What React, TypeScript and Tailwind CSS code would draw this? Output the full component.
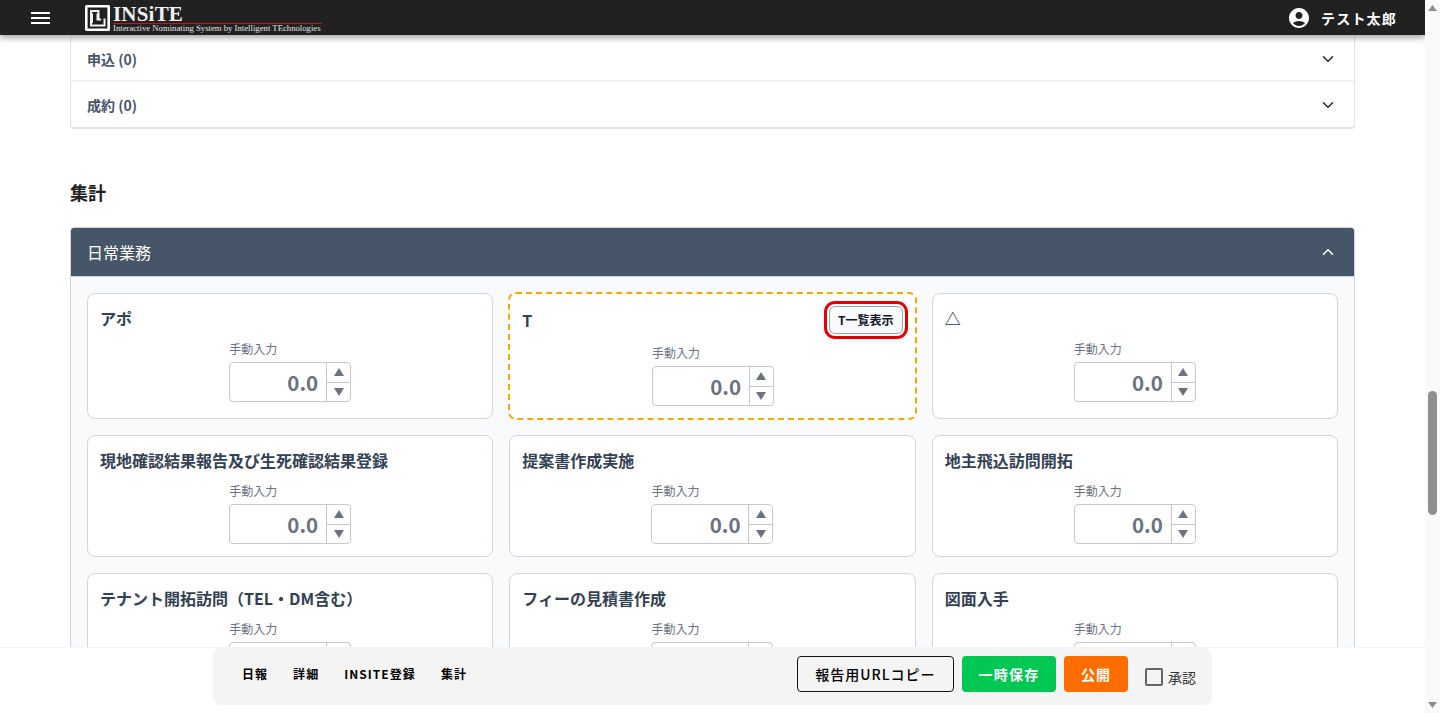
import * as React from 'react';
import { ChevronDown, ChevronUp } from 'lucide-react';

const font = '[font-family:"Noto_Sans_CJK_JP","Noto_Sans",sans-serif]';

const row1 = ['アポ', 'T', '△'];
const row2 = ['現地確認結果報告及び生死確認結果登録', '提案書作成実施', '地主飛込訪問開拓'];
const row3 = ['テナント開拓訪問（TEL・DM含む）', 'フィーの見積書作成', '図面入手'];

function NumberBox() {
  return (
    <div className="flex flex-col items-center">
      <div className="w-[122px]">
        <div className="mb-[5px] text-xs leading-4 text-[#6b7280]">手動入力</div>
        <div className="flex h-10 rounded border border-[#c3c8d2] bg-white">
          <input
            readOnly
            value="0.0"
            className="w-full min-w-0 bg-transparent pt-px pr-[8px] text-right text-[20.500px] font-semibold text-[#6b7280] outline-none"
          />
          <div className="flex w-6 shrink-0 flex-col border-l border-[#c3c8d2]">
            <div className="flex flex-1 items-center justify-center border-b border-[#c3c8d2]">
              <svg width="10" height="8" viewBox="0 0 10 8">
                <polygon points="5,0 10,8 0,8" fill="#6b7280" />
              </svg>
            </div>
            <div className="flex flex-1 items-center justify-center">
              <svg width="10" height="8" viewBox="0 0 10 8">
                <polygon points="0,0 10,0 5,8" fill="#6b7280" />
              </svg>
            </div>
          </div>
        </div>
      </div>
    </div>
  );
}

function Card({ title }: { title: string }) {
  if (title === 'T') {
    return (
      <div className="-m-px rounded-lg border-2 border-dashed border-[#ffa500] bg-white px-3 pt-[11px] pb-3">
        <div className="mb-[10px] flex h-[30px] items-start justify-between">
          <span className="text-base leading-[30px] font-bold text-[#334155]">T</span>
          <button className="mt-px h-[28px] w-[74px] rounded-md border border-[#94a3b8] bg-[#f8fafc] text-xs font-bold text-[#111827] outline-[3px] outline-offset-2 outline-[#e60000] outline-solid">
            T一覧表示
          </button>
        </div>
        <div className="pl-px">
          <NumberBox />
        </div>
      </div>
    );
  }
  return (
    <div className="rounded-lg border border-[#d1d5db] bg-white px-3 pt-[11px] pb-3">
      <div className="mb-[10px] h-[26px] text-base leading-[26px] font-bold text-[#334155]">{title}</div>
      <NumberBox />
    </div>
  );
}

function App() {
  return (
    <div className={`flex h-[713px] w-full overflow-hidden bg-white ${font}`}>
      <div className="relative flex min-w-0 flex-1 flex-col overflow-hidden">
        <header className="z-20 flex h-[35px] shrink-0 items-center bg-[#212121] pr-[28px] pl-[31px] shadow-[0_3px_6px_rgba(0,0,0,0.35)]">
          <div className="flex w-[19px] flex-col gap-[3px]">
            <span className="h-[2px] bg-white" />
            <span className="h-[2px] bg-white" />
            <span className="h-[2px] bg-white" />
          </div>
          <div className="ml-[35px] flex items-center">
            <svg width="25" height="26" viewBox="0 0 25 26">
              <rect x="1.200" y="1.200" width="22.600" height="23.600" rx="1" fill="#212121" stroke="#fff" strokeWidth="2.800" />
              <path d="M5 5h9.500v8.500H20.500v8H5z" fill="#f5f5f5" />
              <path d="M7 7h5.500v1.500h-1v7H16v-2.500h2.500V19.500H7V18h1V8.500H7z" fill="#212121" />
            </svg>
            <div className="ml-[3px] flex w-[209px] flex-col">
              <span className="h-[19px] [font-family:'Liberation_Serif',serif] text-[21px] leading-[21px] font-bold tracking-[0.2px] text-[#f0f0f0]">
                INSiTE
              </span>
              <span className="h-[9px] border-t border-[#b71c1c] [font-family:'Liberation_Serif',serif] text-[8.7px] leading-[9px] whitespace-nowrap text-[#e5e5e5]">
                Interactive Nominating System by Intelligent TEchnologies
              </span>
            </div>
          </div>
          <div className="ml-auto flex items-center">
            <svg width="24" height="24" viewBox="0 0 24 24" fill="#fff">
              <path d="M12 2C6.48 2 2 6.48 2 12s4.48 10 10 10 10-4.48 10-10S17.52 2 12 2zm0 4c1.930 0 3.500 1.570 3.500 3.500S13.930 13 12 13s-3.500-1.570-3.500-3.500S10.070 6 12 6zm0 14c-2.030 0-4.430-.82-6.140-2.880C7.550 15.800 9.680 15 12 15s4.450.8 6.140 2.120C16.430 19.180 14.030 20 12 20z" />
            </svg>
            <span className="ml-[10px] text-sm font-bold tracking-[1.200px] text-white">テスト太郎</span>
          </div>
        </header>

        <main className="px-[70px]">
          <div className="rounded-b border-x border-b-2 border-[#dfe2e8] bg-white">
            <div className="flex h-[47px] items-center justify-between border-b-2 border-[#f1f3f5] pt-[3px] pr-[17px] pl-4">
              <span className="text-sm font-bold text-[#475569]">申込 (0)</span>
              <ChevronDown size={18} strokeWidth={2} className="text-[#1e293b]" />
            </div>
            <div className="flex h-[45px] items-center justify-between pt-px pr-[17px] pl-4">
              <span className="text-sm font-bold text-[#475569]">成約 (0)</span>
              <ChevronDown size={18} strokeWidth={2} className="text-[#1e293b]" />
            </div>
          </div>

          <h2 className="mt-[49px] mb-[21px] text-lg leading-7 font-bold text-[#212121]">集計</h2>

          <section className="rounded border border-[#cbd5e1] bg-[#f8fafc]">
            <div className="flex h-[49px] items-center justify-between rounded-t-[3px] border-b border-[#cbd5e1] bg-[#475569] pr-[17px] pl-4">
              <span className="text-base text-white">日常業務</span>
              <ChevronUp size={18} strokeWidth={2} className="text-white" />
            </div>
            <div className="flex flex-col gap-4 p-4">
              <div className="grid grid-cols-3 gap-4">
                {row1.map((t) => (
                  <Card key={t} title={t} />
                ))}
              </div>
              <div className="grid grid-cols-3 gap-4">
                {row2.map((t) => (
                  <Card key={t} title={t} />
                ))}
              </div>
              <div className="grid grid-cols-3 gap-4">
                {row3.map((t) => (
                  <Card key={t} title={t} />
                ))}
              </div>
            </div>
          </section>
        </main>

        <div className="absolute inset-x-0 bottom-0 z-10 flex h-[66px] justify-center border-t border-[#f3f4f6] bg-white pb-2">
          <div className="flex w-[999px] items-center justify-between rounded-lg bg-[#f4f4f4] pr-4 pb-[6px] pl-[29px]">
            <nav className="flex gap-[25px] text-xs font-bold tracking-[1.050px] text-black">
              <span>日報</span>
              <span>詳細</span>
              <span>INSITE登録</span>
              <span>集計</span>
            </nav>
            <div className="flex items-center">
              <button className="h-[36px] w-[157px] rounded border border-[#111] text-sm font-medium tracking-[1px] text-black">
                報告用URLコピー
              </button>
              <button className="ml-2 h-[36px] w-[94px] rounded bg-[#00c853] text-sm font-bold tracking-[1.200px] text-white">
                一時保存
              </button>
              <button className="ml-2 h-[36px] w-[64px] rounded bg-[#ff6d00] text-sm font-bold tracking-[1px] text-white">
                公開
              </button>
              <div className="mt-[6px] flex items-center">
                <span className="ml-[17px] h-[18px] w-[18px] rounded-[2px] border-2 border-[#666]" />
                <span className="ml-[5px] text-sm text-[#333]">承認</span>
              </div>
            </div>
          </div>
        </div>
      </div>

      <div className="flex w-[15px] shrink-0 flex-col items-center bg-[#fafafa]">
        <svg className="mt-[5px]" width="9" height="6" viewBox="0 0 9 6">
          <polygon points="4.500,0 9,6 0,6" fill="#8c8c8c" />
        </svg>
        <div className="mt-[380px] h-[124px] w-[9px] rounded-full bg-[#8f8f8f]" />
        <svg className="mt-auto mb-[5px]" width="9" height="6" viewBox="0 0 9 6">
          <polygon points="0,0 9,0 4.500,6" fill="#8c8c8c" />
        </svg>
      </div>
    </div>
  );
}

export default App;
